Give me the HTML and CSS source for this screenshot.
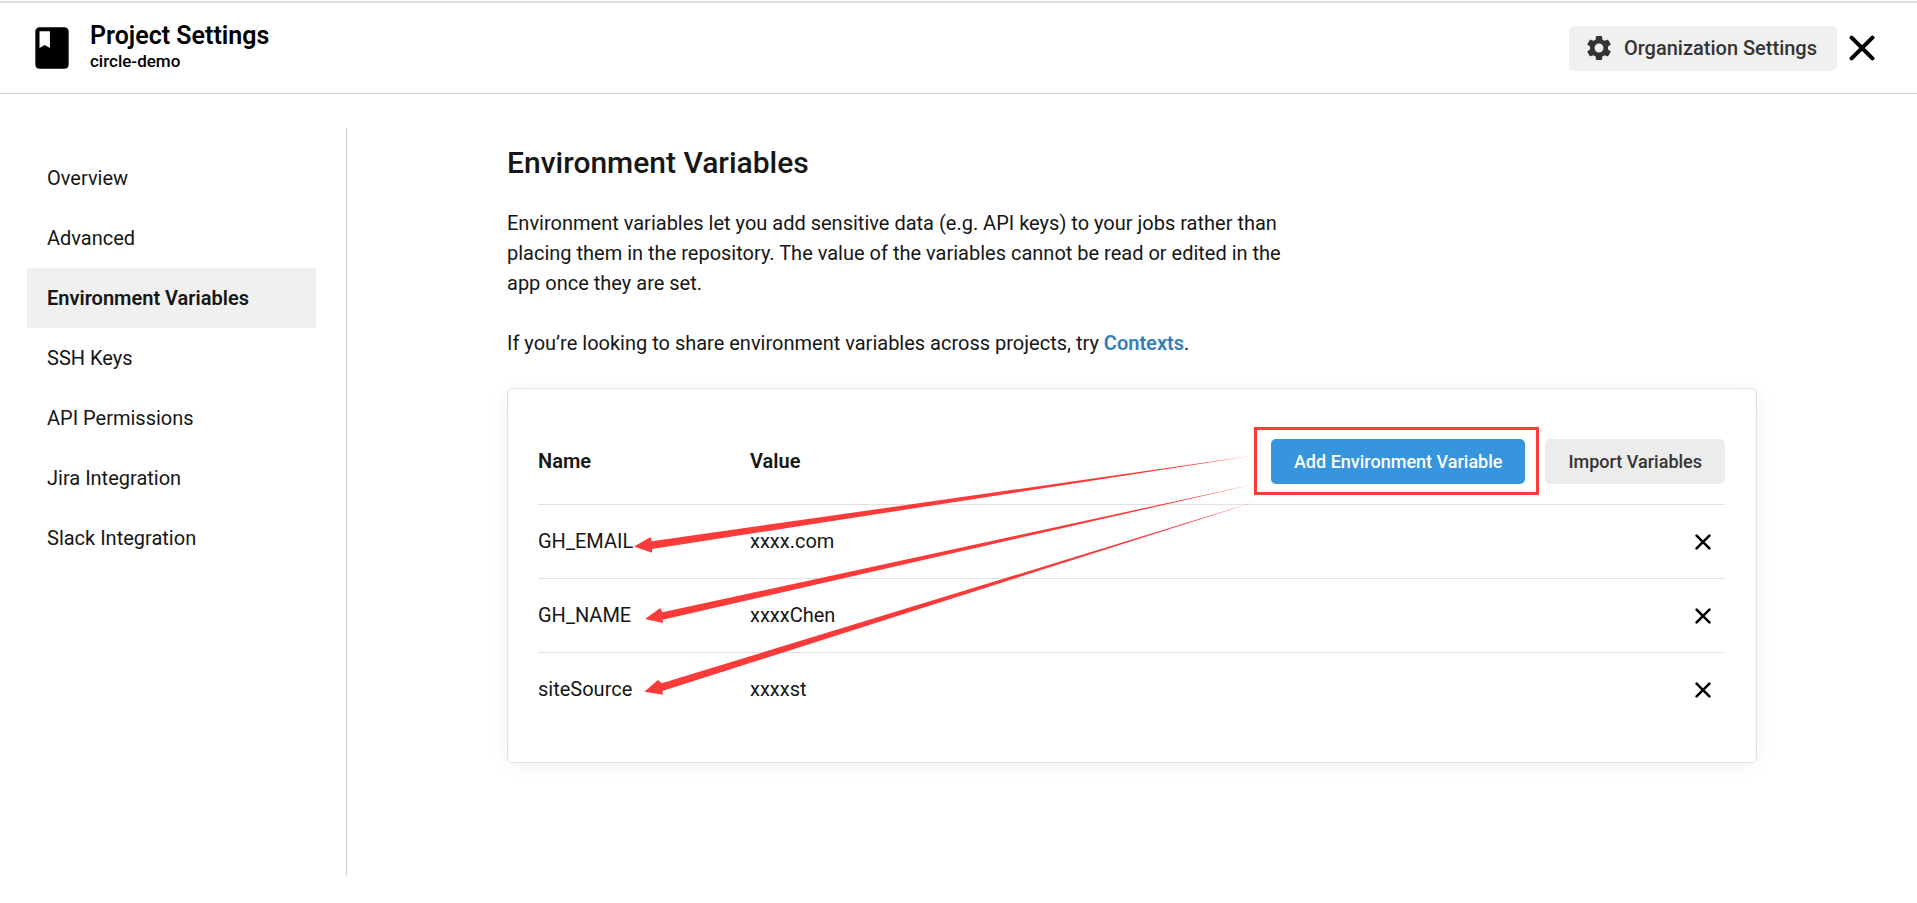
FILE: index.html
```html
<!DOCTYPE html>
<html lang="en">
<head>
<meta charset="utf-8">
<title>Project Settings</title>
<link rel="stylesheet" href="styles.css">
</head>
<body>
<header class="topbar">
  <svg class="book" viewBox="0 0 24 24" aria-hidden="true"><path d="M18 2H6c-1.1 0-2 .9-2 2v16c0 1.1.9 2 2 2h12c1.1 0 2-.9 2-2V4c0-1.1-.9-2-2-2zM6 4h5v8l-2.500-1.500L6 12V4z"/></svg>
  <div class="titles">
    <h1 class="title">Project Settings</h1>
    <p class="project">circle-demo</p>
  </div>
  <button class="button org" type="button">
    <svg class="gear" viewBox="0 0 24 24" aria-hidden="true"><path d="M19.140 12.940c.04-.3.06-.61.06-.94 0-.32-.02-.64-.07-.94l2.030-1.580c.18-.14.23-.41.12-.61l-1.920-3.320c-.12-.22-.37-.29-.59-.22l-2.390.96c-.5-.38-1.030-.7-1.620-.94l-.36-2.540c-.04-.24-.24-.41-.48-.41h-3.840c-.24 0-.43.17-.47.41l-.36 2.540c-.59.24-1.130.57-1.620.94l-2.390-.96c-.22-.08-.47 0-.59.22L2.740 8.870c-.12.21-.08.47.12.61l2.030 1.580c-.05.3-.09.63-.09.94s.02.64.07.94l-2.030 1.580c-.18.14-.23.41-.12.61l1.920 3.320c.12.22.37.29.59.22l2.390-.96c.5.38 1.030.7 1.620.94l.36 2.540c.05.24.24.41.48.41h3.840c.24 0 .44-.17.47-.41l.36-2.540c.59-.24 1.130-.56 1.620-.94l2.390.96c.22.08.47 0 .59-.22l1.920-3.320c.12-.22.07-.47-.12-.61l-2.010-1.580zM12 15.600c-1.980 0-3.600-1.620-3.600-3.600s1.620-3.600 3.600-3.600 3.600 1.620 3.600 3.600-1.620 3.600-3.600 3.600z"/></svg>
    <span>Organization Settings</span>
  </button>
  <button class="close" type="button" aria-label="Close"><svg class="cross" viewBox="0 0 25 25" aria-hidden="true"><path d="M2.500 2.500l20 20M22.500 2.500l-20 20"/></svg></button>
</header>
<div class="page">
  <nav class="sidebar" aria-label="Project settings">
    <a class="item" href="#">Overview</a>
    <a class="item" href="#">Advanced</a>
    <a class="item current" href="#" aria-current="page">Environment Variables</a>
    <a class="item" href="#">SSH Keys</a>
    <a class="item" href="#">API Permissions</a>
    <a class="item" href="#">Jira Integration</a>
    <a class="item" href="#">Slack Integration</a>
  </nav>
  <main class="main">
    <div class="content">
      <h2 class="heading">Environment Variables</h2>
      <p class="text">Environment variables let you add sensitive data (e.g. API keys) to your jobs rather than placing them in the repository. The value of the variables cannot be read or edited in the app once they are set.</p>
      <p class="text">If you’re looking to share environment variables across projects, try <a class="link" href="#">Contexts</a>.</p>
      <section class="card">
        <table class="vars">
          <thead>
            <tr>
              <th class="name" scope="col">Name</th>
              <th class="value" scope="col">Value</th>
              <td class="tools">
                <div class="actions">
                  <span class="marked"><button class="button primary" type="button">Add Environment Variable</button></span>
                  <button class="button" type="button">Import Variables</button>
                </div>
              </td>
            </tr>
          </thead>
          <tbody>
            <tr>
              <td>GH_EMAIL</td><td>xxxx.com</td>
              <td class="tools"><button class="remove" type="button" aria-label="Remove GH_EMAIL"><svg class="cross" viewBox="0 0 25 25" aria-hidden="true"><path d="M2.500 2.500l20 20M22.500 2.500l-20 20"/></svg></button></td>
            </tr>
            <tr>
              <td>GH_NAME</td><td>xxxxChen</td>
              <td class="tools"><button class="remove" type="button" aria-label="Remove GH_NAME"><svg class="cross" viewBox="0 0 25 25" aria-hidden="true"><path d="M2.500 2.500l20 20M22.500 2.500l-20 20"/></svg></button></td>
            </tr>
            <tr>
              <td>siteSource</td><td>xxxxst</td>
              <td class="tools"><button class="remove" type="button" aria-label="Remove siteSource"><svg class="cross" viewBox="0 0 25 25" aria-hidden="true"><path d="M2.500 2.500l20 20M22.500 2.500l-20 20"/></svg></button></td>
            </tr>
          </tbody>
        </table>
        <svg class="arrows" viewBox="0 0 1248 373" aria-hidden="true">
          <path d="M126 157.500L142.700 148L143.700 152.300L746 66.500L144 160L144 163.700Z"/>
          <path d="M137 230L152.300 219L154.300 223.300L745 95.500L154.500 230.700L155 234Z"/>
          <path d="M136.300 302.700L150 291L153.700 294.300L748 112.500L154.300 302L155 305.700Z"/>
        </svg>
      </section>
    </div>
  </main>
</div>
</body>
</html>
```
FILE: styles.css
```css
* {
  box-sizing: border-box;
}

body {
  margin: 0;
  padding-top: 1px;
  min-height: 100vh;
  display: flex;
  flex-direction: column;
  background: #fff;
  color: #161616;
  font-family: Roboto, "Liberation Sans", sans-serif;
  font-size: 20px;
  line-height: 30px;
}

h1, h2, p {
  margin: 0;
}

button {
  border: 0;
  padding: 0;
  background: none;
  font: inherit;
  color: inherit;
  cursor: pointer;
}

.topbar {
  display: flex;
  align-items: center;
  height: 93px;
  padding: 0 42px 0 27px;
  border-top: 2px solid #dadce0;
  border-bottom: 1px solid #d0d0d0;
  color: #000;
}

.book {
  width: 50px;
  height: 50px;
}

.titles {
  flex: 1;
  padding: 0 0 2px 13px;
}

.title {
  font-size: 25px;
  font-weight: 600;
  line-height: 28px;
}

.project {
  font-size: 17px;
  font-weight: 500;
  line-height: 22px;
}

.button {
  height: 45px;
  padding: 0 23px;
  border-radius: 5px;
  background: #ececec;
  color: #343434;
  font-size: 18px;
  font-weight: 500;
}

.org {
  display: flex;
  align-items: center;
  gap: 10px;
  padding: 0 20px 0 15px;
  background: #f0f0f0;
  font-size: 20px;
}

.gear {
  width: 30px;
  height: 30px;
  fill: #343434;
}

.primary {
  background: #3795de;
  color: #fff;
}

.close {
  display: flex;
  margin-left: 12px;
}

.cross {
  width: 26px;
  height: 26px;
  fill: none;
  stroke: #000;
  stroke-width: 4;
  stroke-linecap: round;
}

.page {
  flex: 1;
  display: flex;
  padding: 34px 0 27px;
}

.sidebar {
  flex: 0 0 347px;
  padding: 20px 30px 0 27px;
  border-right: 1px solid #d0d0d0;
}

.item {
  display: block;
  padding: 15px 20px;
  color: inherit;
  text-decoration: none;
}

.current {
  background: #f0f0f0;
  font-weight: 600;
}

.main {
  flex: 1;
  min-width: 0;
}

.content {
  max-width: 1250px;
  margin: 0 auto;
  padding-top: 15px;
}

.heading {
  margin-bottom: 25px;
  font-size: 30px;
  font-weight: 500;
  line-height: 40px;
}

.text {
  max-width: 780px;
  margin-bottom: 30px;
}

.link {
  color: #327eba;
  font-weight: 600;
  text-decoration: none;
}

.card {
  position: relative;
  padding: 30px 31px 35px 30px;
  border: 1px solid #e1e1e1;
  border-radius: 5px;
  box-shadow: 0 2px 20px rgba(0, 0, 0, 0.06);
}

.vars {
  width: 100%;
  border-collapse: separate;
  border-spacing: 0;
}

.vars th,
.vars td {
  height: 74px;
  padding: 0 0 2px;
  border-bottom: 1px solid #e1e1e1;
  text-align: left;
  font-weight: 400;
}

.vars .tools {
  padding: 0;
}

.vars thead th,
.vars thead td {
  height: 86px;
  font-weight: 600;
}

.vars tbody tr:last-child td {
  border-bottom: 0;
}

.name,
.value {
  width: 212px;
}

.actions {
  display: flex;
  justify-content: flex-end;
  gap: 20px;
}

.marked {
  position: relative;
}

.marked::after {
  content: "";
  position: absolute;
  inset: -12px -14px -11px -17px;
  border: 3px solid #fb3a3a;
  pointer-events: none;
}

.remove {
  display: flex;
  margin: 0 14px 0 auto;
}

.remove .cross {
  width: 16px;
  height: 16px;
}

.arrows {
  position: absolute;
  top: 0;
  left: 0;
  width: 100%;
  fill: #fb3a3a;
  pointer-events: none;
}
```
